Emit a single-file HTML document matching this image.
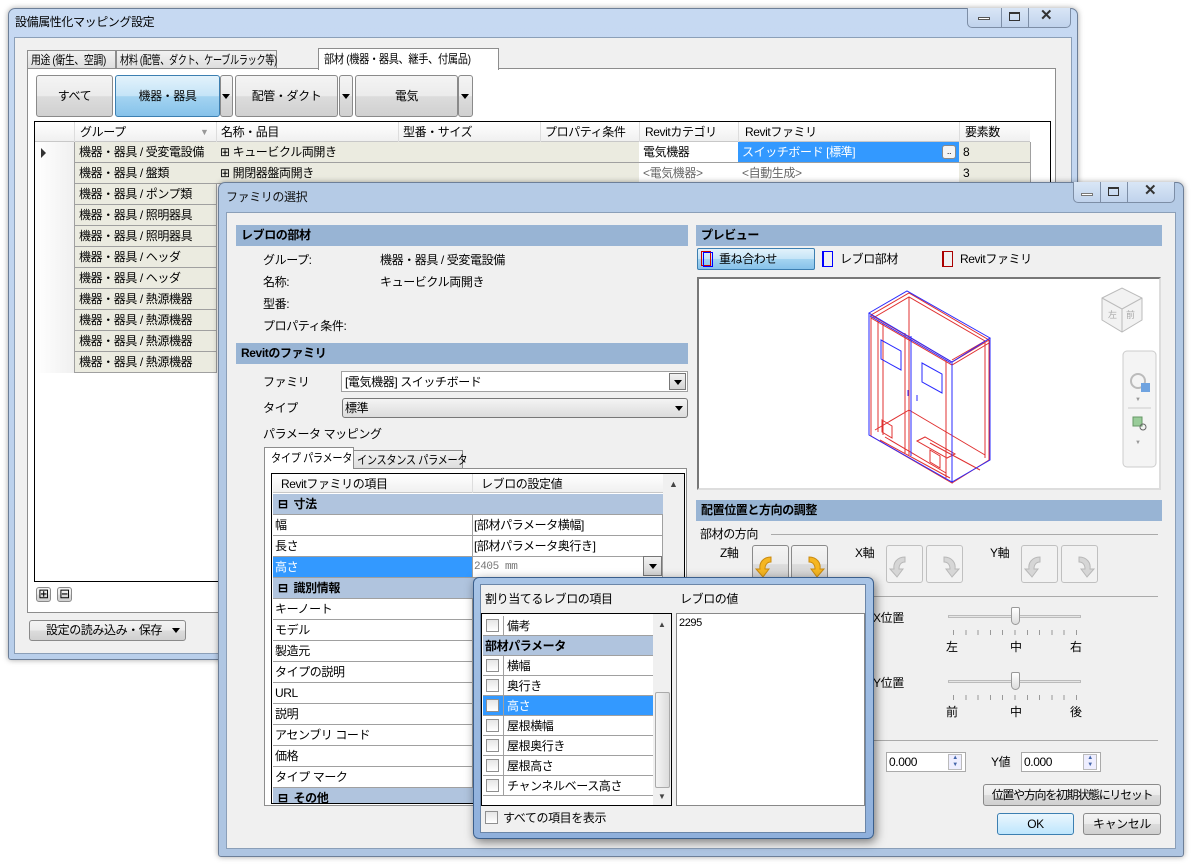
<!DOCTYPE html>
<html><head><meta charset="utf-8">
<style>
*{box-sizing:border-box;margin:0;padding:0}
body{width:1193px;height:864px;background:#fff;position:relative;overflow:hidden;font:12px "Liberation Sans","Noto Sans CJK JP",sans-serif;color:#000;letter-spacing:-0.4px}
.a{position:absolute}
.t{position:absolute;white-space:nowrap;line-height:14px}
.sx{transform-origin:0 50%}
.frame{position:absolute;background:linear-gradient(#c6d9f2,#b9cfeb);border:1px solid #6d7f98;border-radius:7px 7px 3px 3px;box-shadow:0 0 6px rgba(0,0,0,.35)}
.client{position:absolute;background:#f0f0f0;border:1px solid #8b9fb8}
.btn{position:absolute;border:1px solid #8a8a8a;border-radius:3px;background:linear-gradient(#f4f4f4 0,#ebebeb 50%,#dcdcdc 51%,#d0d0d0 100%);text-align:center}
.blue{background:linear-gradient(#e3f2fb 0,#c4e4f7 50%,#a4d4f1 51%,#86c2ea 100%);border-color:#3c7fb1}
.hdr{position:absolute;background:#98b4d4;font-weight:bold;padding-left:5px;line-height:21px;height:21px}
.cell{position:absolute;border-right:1px solid #a0a0a0;border-bottom:1px solid #a0a0a0;line-height:20px;padding-left:4px;white-space:nowrap;overflow:hidden}
.row{position:absolute;border-bottom:1px solid #a0a0a0;line-height:20px;white-space:nowrap;overflow:hidden}
.cb{position:absolute;width:13px;height:13px;border:1px solid #8f8f8f;background:linear-gradient(#e6e6e6,#fff)}
.tri{position:absolute;width:0;height:0;border-left:4px solid transparent;border-right:4px solid transparent;border-top:5px solid #000}
.tight{letter-spacing:-1.3px}
</style></head><body>

<div class="frame" style="left:8px;top:8px;width:1070px;height:652px"></div>
<div class="t" style="left:15px;top:15px">設備属性化マッピング設定</div>
<div class="a" style="left:967px;top:8px;width:104px;height:20px;border:1px solid #7d8ea6;border-top:none;border-radius:0 0 5px 5px;background:linear-gradient(#d9e6f6,#c0d3ec)"></div>
<div class="a" style="left:1001px;top:8px;width:1px;height:19px;background:#7d8ea6"></div>
<div class="a" style="left:1028px;top:8px;width:1px;height:19px;background:#7d8ea6"></div>
<div class="a" style="left:978px;top:17px;width:12px;height:3px;border:1px solid #555;background:#fff"></div>
<div class="a" style="left:1009px;top:12px;width:11px;height:9px;border:1px solid #333;border-top-width:2px"></div>
<div class="t" style="left:1040px;top:9px;font-size:15px;font-weight:bold;color:#333">✕</div>
<div class="client" style="left:14px;top:37px;width:1058px;height:617px"></div>

<div class="a" style="left:27px;top:50px;width:89px;height:19px;border:1px solid #8d8d8d;background:linear-gradient(#f2f2f2,#dedede)"></div>
<div class="t sx" style="left:31px;top:53px;transform:scaleX(.82)">用途 (衛生、空調)</div>
<div class="a" style="left:116px;top:50px;width:161px;height:19px;border:1px solid #8d8d8d;background:linear-gradient(#f2f2f2,#dedede)"></div>
<div class="t sx" style="left:120px;top:53px;transform:scaleX(.76)">材料 (配管、ダクト、ケーブルラック等)</div>
<div class="a" style="left:27px;top:68px;width:1029px;height:545px;border:1px solid #8d8d8d;background:#fff"></div>
<div class="a" style="left:318px;top:48px;width:181px;height:22px;border:1px solid #8d8d8d;border-bottom:none;background:#fff"></div>
<div class="t sx" style="left:324px;top:52px;transform:scaleX(.85)">部材 (機器・器具、継手、付属品)</div>

<div class="btn" style="left:36px;top:75px;width:77px;height:42px;line-height:40px">すべて</div>
<div class="btn blue" style="left:115px;top:75px;width:105px;height:42px;line-height:40px">機器・器具</div>
<div class="btn" style="left:220px;top:75px;width:13px;height:42px"></div><div class="tri" style="left:222px;top:94px"></div>
<div class="btn" style="left:235px;top:75px;width:103px;height:42px;line-height:40px">配管・ダクト</div>
<div class="btn" style="left:339px;top:75px;width:14px;height:42px"></div><div class="tri" style="left:342px;top:94px"></div>
<div class="btn" style="left:355px;top:75px;width:103px;height:42px;line-height:40px">電気</div>
<div class="btn" style="left:458px;top:75px;width:15px;height:42px"></div><div class="tri" style="left:461px;top:94px"></div>

<div class="a" style="left:34px;top:121px;width:1017px;height:461px;border:1px solid #000;background:#fff"></div>
<div class="a" style="left:35px;top:122px;width:995px;height:20px;background:linear-gradient(#fff,#f0f0f0);border-bottom:1px solid #c8c8c8"></div>
<div class="t" style="left:80px;top:125px">グループ</div><div class="t" style="left:200px;top:125px;color:#999;font-size:9px">▼</div>
<div class="t" style="left:221px;top:125px">名称・品目</div>
<div class="t" style="left:403px;top:125px">型番・サイズ</div>
<div class="t" style="left:545px;top:125px">プロパティ条件</div>
<div class="t" style="left:645px;top:125px">Revitカテゴリ</div>
<div class="t" style="left:745px;top:125px">Revitファミリ</div>
<div class="t" style="left:965px;top:125px">要素数</div>
<div class="a" style="left:74px;top:122px;width:1px;height:20px;background:#ddd"></div>
<div class="a" style="left:216px;top:122px;width:1px;height:20px;background:#ddd"></div>
<div class="a" style="left:398px;top:122px;width:1px;height:20px;background:#ddd"></div>
<div class="a" style="left:540px;top:122px;width:1px;height:20px;background:#ddd"></div>
<div class="a" style="left:639px;top:122px;width:1px;height:20px;background:#ddd"></div>
<div class="a" style="left:738px;top:122px;width:1px;height:20px;background:#ddd"></div>
<div class="a" style="left:959px;top:122px;width:1px;height:20px;background:#ddd"></div>

<div class="a" style="left:35px;top:142px;width:39px;height:231px;background:linear-gradient(90deg,#fff,#f0f0f0)"></div>
<div class="a" style="left:41px;top:148px;border-top:5px solid transparent;border-bottom:5px solid transparent;border-left:5px solid #333"></div>
<div id="rows"></div>
<script>
var g=["受変電設備","盤類","ポンプ類","照明器具","照明器具","ヘッダ","ヘッダ","熱源機器","熱源機器","熱源機器","熱源機器"];
var h="";
for(var i=0;i<11;i++){var y=142+i*21;
h+='<div class="cell" style="left:74px;top:'+y+'px;width:143px;height:21px;background:#ebebe0;border-left:1px solid #a0a0a0">機器・器具 / '+g[i]+'</div>';
if(i<2){
h+='<div class="cell" style="left:216px;top:'+y+'px;width:183px;height:21px;background:#ebebe0">⊞ '+(i==0?'キュービクル両開き':'開閉器盤両開き')+'</div>';
h+='<div class="cell" style="left:398px;top:'+y+'px;width:143px;height:21px;background:#ebebe0"></div>';
h+='<div class="cell" style="left:540px;top:'+y+'px;width:100px;height:21px;background:#ebebe0"></div>';
h+='<div class="cell" style="left:639px;top:'+y+'px;width:100px;height:21px;background:#fff;'+(i==1?'color:#666':'')+'">'+(i==0?'電気機器':'&lt;電気機器&gt;')+'</div>';
h+='<div class="cell" style="left:738px;top:'+y+'px;width:222px;height:21px;'+(i==0?'background:#3399ff;color:#fff':'background:#fff;color:#666')+'">'+(i==0?'スイッチボード [標準]':'&lt;自動生成&gt;')+'</div>';
h+='<div class="cell" style="left:959px;top:'+y+'px;width:72px;height:21px;background:#ebebe0">'+(i==0?'8':'3')+'</div>';
}}
document.getElementById('rows').outerHTML=h;
</script>
<div class="btn" style="left:942px;top:145px;width:14px;height:14px;font-size:9px;line-height:10px;background:#f4f4f4">..</div>
<div class="btn" style="left:36px;top:587px;width:15px;height:15px;line-height:12px;font-size:13px">⊞</div>
<div class="btn" style="left:57px;top:587px;width:15px;height:15px;line-height:12px;font-size:13px">⊟</div>
<div class="btn" style="left:29px;top:620px;width:157px;height:21px;line-height:19px;text-align:left;padding-left:16px">設定の読み込み・保存</div>
<div class="tri" style="left:172px;top:628px"></div>

<div class="frame" style="left:218px;top:182px;width:966px;height:675px;background:linear-gradient(#b5cbe6,#aec5e2)"></div>
<div class="t" style="left:226px;top:190px;color:#111">ファミリの選択</div>
<div class="a" style="left:1073px;top:182px;width:102px;height:21px;border:1px solid #7d8ea6;border-top:none;border-radius:0 0 5px 5px;background:linear-gradient(#d9e6f6,#c0d3ec)"></div>
<div class="a" style="left:1100px;top:182px;width:1px;height:20px;background:#7d8ea6"></div>
<div class="a" style="left:1127px;top:182px;width:1px;height:20px;background:#7d8ea6"></div>
<div class="a" style="left:1081px;top:193px;width:12px;height:3px;border:1px solid #777;background:#fff"></div>
<div class="a" style="left:1108px;top:187px;width:11px;height:9px;border:1px solid #333;border-top-width:2px"></div>
<div class="t" style="left:1144px;top:184px;font-size:15px;font-weight:bold;color:#333">✕</div>
<div class="client" style="left:226px;top:212px;width:950px;height:637px"></div>

<div class="hdr" style="left:236px;top:225px;width:452px">レブロの部材</div>
<div class="t" style="left:263px;top:253px">グループ:</div><div class="t" style="left:380px;top:253px">機器・器具 / 受変電設備</div>
<div class="t" style="left:263px;top:275px">名称:</div><div class="t" style="left:380px;top:275px">キュービクル両開き</div>
<div class="t" style="left:263px;top:297px">型番:</div>
<div class="t" style="left:263px;top:319px">プロパティ条件:</div>
<div class="hdr" style="left:236px;top:343px;width:452px">Revitのファミリ</div>
<div class="t" style="left:263px;top:375px">ファミリ</div>
<div class="a" style="left:341px;top:371px;width:347px;height:21px;border:1px solid #a0a0a0;background:#fff"></div>
<div class="t" style="left:345px;top:375px">[電気機器] スイッチボード</div>
<div class="a" style="left:669px;top:373px;width:17px;height:17px;border:1px solid #777;background:linear-gradient(#f2f2f2,#d4d4d4)"></div><div class="tri" style="left:674px;top:380px"></div>
<div class="t" style="left:263px;top:401px">タイプ</div>
<div class="a" style="left:342px;top:398px;width:346px;height:20px;border:1px solid #777;border-radius:3px;background:linear-gradient(#f4f4f4,#dcdcdc)"></div>
<div class="t" style="left:345px;top:401px">標準</div><div class="tri" style="left:675px;top:406px"></div>
<div class="t" style="left:263px;top:427px">パラメータ マッピング</div>

<div class="a" style="left:264px;top:468px;width:423px;height:338px;border:1px solid #8d8d8d;background:#fff"></div>
<div class="a" style="left:353px;top:450px;width:110px;height:19px;border:1px solid #8d8d8d;background:linear-gradient(#f2f2f2,#dedede)"></div>
<div class="t sx" style="left:357px;top:453px;transform:scaleX(.85)">インスタンス パラメータ</div>
<div class="a" style="left:264px;top:447px;width:90px;height:22px;border:1px solid #8d8d8d;border-bottom:none;background:#fff"></div>
<div class="t sx" style="left:271px;top:451px;transform:scaleX(.85)">タイプ パラメータ</div>

<div class="a" style="left:271px;top:473px;width:414px;height:331px;border:1px solid #000;background:#fff;overflow:hidden">
 <div class="a" style="left:1px;top:0;width:390px;height:19px;background:linear-gradient(#fff,#f0f0f0);border-bottom:1px solid #c8c8c8"></div>
 <div class="a" style="left:200px;top:0;width:1px;height:19px;background:#ddd"></div>
 <div class="t" style="left:9px;top:3px">Revitファミリの項目</div>
 <div class="t" style="left:209px;top:3px">レブロの設定値</div>
 <div class="a" style="left:391px;top:0;width:22px;height:330px;background:#f0f0f0"></div>
 <div class="t" style="left:397px;top:3px;font-size:9px;color:#444">▲</div>
 <div id="pg"></div>
</div>
<script>
var r=[["g","寸法"],["r","幅","[部材パラメータ横幅]"],["r","長さ","[部材パラメータ奥行き]"],["s","高さ","2405 mm"],["g","識別情報"],["r","キーノート"],["r","モデル"],["r","製造元"],["r","タイプの説明"],["r","URL"],["r","説明"],["r","アセンブリ コード"],["r","価格"],["r","タイプ マーク"],["g","その他"]];
var h="";
for(var i=0;i<r.length;i++){var y=20+i*21;var e=r[i];
if(e[0]=="g"){h+='<div class="row" style="left:1px;top:'+y+'px;width:390px;height:21px;background:#b0c4de;font-weight:bold;padding-left:5px">⊟&nbsp;&nbsp;'+e[1]+'</div>';}
else{h+='<div class="cell" style="left:1px;top:'+y+'px;width:200px;height:21px;padding-left:2px;'+(e[0]=="s"?'background:#3399ff;color:#fff':'')+'">'+e[1]+'</div>';
h+='<div class="cell" style="left:200px;top:'+y+'px;width:191px;height:21px;padding-left:2px;'+(e[0]=="s"?'color:#777;font-family:\'Liberation Mono\',monospace;font-size:11px':'')+'">'+(e[2]||'')+'</div>';}}
document.getElementById('pg').outerHTML=h;
</script>
<div class="a" style="left:643px;top:556px;width:19px;height:20px;border:1px solid #777;background:linear-gradient(#f2f2f2,#d4d4d4)"></div><div class="tri" style="left:649px;top:564px"></div>

<div class="hdr" style="left:696px;top:225px;width:466px">プレビュー</div>
<div class="btn blue" style="left:697px;top:248px;width:118px;height:22px;border-radius:2px"></div>
<div class="a" style="left:701px;top:251px;width:10px;height:15px;border:1px solid #c00"></div>
<div class="a" style="left:703px;top:252px;width:10px;height:15px;border:1px solid #00f"></div>
<div class="t" style="left:719px;top:252px">重ね合わせ</div>
<div class="a" style="left:822px;top:251px;width:11px;height:16px;border:1px solid #00f;border-left-width:2px"></div>
<div class="t" style="left:840px;top:252px">レブロ部材</div>
<div class="a" style="left:942px;top:251px;width:11px;height:16px;border:1px solid #a00;border-left-width:2px"></div>
<div class="t" style="left:960px;top:252px">Revitファミリ</div>
<div class="a" style="left:697px;top:277px;width:464px;height:213px;border:2px solid #777;border-right-color:#ddd;border-bottom-color:#ddd;background:#fff"></div>
<svg class="a" style="left:697px;top:277px" width="464" height="213" viewBox="697 277 464 213">
 <g fill="none" stroke="#e03030" stroke-width="1">
  <path d="M871 315 L909 293 L989 340 L952 362 Z"/>
  <path d="M873 318 L909 297 L985 341 L952 360"/>
  <path d="M871 318 L952 365 L989 343"/>
  <path d="M871 315 V436 L952 483 V362"/><path d="M989 340 V460 L952 483"/>
  <path d="M878 320 V432 M883 323 V435 M905 333 V453 M909 336 V455 M946 360 V478 M985 343 V458"/>
  <path d="M909 297 V410 L875 430 M909 410 L985 455"/>
  <path d="M882 420 L892 426 V438 L882 432 Z M930 450 L940 456 V468 L930 462 Z"/>
  <path d="M880 440 L950 478 M930 443 L980 470 M885 437 L946 473"/>
  <path d="M917 441 L925 437 L955 454 L947 458 Z"/>
 </g>
 <g fill="none" stroke="#2a2aff" stroke-width="1">
  <path d="M869 313 L907 291 L990 338 L952 362 Z"/>
  <path d="M869 313 V435 L952 482 V362 M990 338 V460 L952 482"/>
  <path d="M911 336 V456 M870 316 L951 363"/>
  <path d="M881 340 L901 351 V370 L881 359 Z M922 363 L942 374 V393 L922 382 Z"/>
  <path d="M908 390 V396 M917 395 V401"/>
 </g>
 <g fill="#f2f2f2" stroke="#bbb"><path d="M1102 298 L1122 288 L1142 298 L1142 320 L1122 332 L1102 320 Z"/><path d="M1102 298 L1122 309 L1142 298 M1122 309 V332" fill="none"/></g>
 <text x="1108" y="318" font-size="9" fill="#aaa">左</text><text x="1126" y="318" font-size="9" fill="#aaa">前</text>
 <rect x="1123" y="351" width="33" height="116" rx="4" fill="#f4f4f4" stroke="#ccc"/>
 <circle cx="1138" cy="381" r="7" fill="none" stroke="#bbb" stroke-width="2"/><rect x="1141" y="383" width="9" height="9" fill="#6fa3e0"/>
 <rect x="1133" y="417" width="9" height="9" fill="#9c9" stroke="#696"/><circle cx="1143" cy="427" r="3" fill="none" stroke="#666"/>
 <line x1="1128" y1="408" x2="1151" y2="408" stroke="#ccc"/>
 <text x="1135" y="401" font-size="6" fill="#999">▼</text><text x="1135" y="444" font-size="6" fill="#999">▼</text>
</svg>

<div class="hdr" style="left:696px;top:500px;width:466px">配置位置と方向の調整</div>
<div class="t" style="left:700px;top:527px">部材の方向</div>
<div class="a" style="left:771px;top:534px;width:387px;height:1px;background:#aaa"></div>
<div class="t" style="left:720px;top:546px">Z軸</div>
<div class="t" style="left:855px;top:546px">X軸</div>
<div class="t" style="left:990px;top:546px">Y軸</div>
<div class="btn" style="left:752px;top:545px;width:37px;height:38px"></div>
<div class="btn" style="left:791px;top:545px;width:37px;height:38px"></div>
<div class="btn" style="left:886px;top:545px;width:37px;height:38px;background:#f2f2f2;border-color:#c0c0c0"></div>
<div class="btn" style="left:926px;top:545px;width:37px;height:38px;background:#f2f2f2;border-color:#c0c0c0"></div>
<div class="btn" style="left:1021px;top:545px;width:37px;height:38px;background:#f2f2f2;border-color:#c0c0c0"></div>
<div class="btn" style="left:1061px;top:545px;width:37px;height:38px;background:#f2f2f2;border-color:#c0c0c0"></div>
<svg class="a" style="left:0;top:0" width="1193" height="864" pointer-events="none">
 <defs>
  <path id="ccw" d="M14 6 C6 6 2 12 3 18 L-1 18 L6 26 L12 18 L8 18 C8 14 10 11 14 11 Z"/>
 </defs>
 <g fill="#f5b622" stroke="#c98a10">
  <use href="#ccw" x="757" y="551"/>
  <use href="#ccw" transform="translate(823 551) scale(-1 1)"/>
 </g>
 <g fill="#d6d6d6" stroke="#b8b8b8">
  <use href="#ccw" x="891" y="551"/>
  <use href="#ccw" transform="translate(958 551) scale(-1 1)"/>
  <use href="#ccw" x="1026" y="551"/>
  <use href="#ccw" transform="translate(1093 551) scale(-1 1)"/>
 </g>
</svg>
<div class="a" style="left:870px;top:596px;width:288px;height:1px;background:#aaa"></div>
<div class="t" style="left:873px;top:611px">X位置</div>
<div class="a" style="left:948px;top:615px;width:133px;height:3px;border:1px solid #bbb;background:#e6e6e6"></div>
<div class="a" style="left:1011px;top:607px;width:9px;height:18px;border:1px solid #999;border-radius:2px 2px 5px 5px;background:linear-gradient(#fff,#ddd)"></div>
<div class="a" style="left:953px;top:630px;width:124px;height:5px;background:repeating-linear-gradient(90deg,#999 0 1px,transparent 1px 12.3px)"></div>
<div class="t" style="left:946px;top:640px">左</div><div class="t" style="left:1010px;top:640px">中</div><div class="t" style="left:1070px;top:640px">右</div>
<div class="t" style="left:873px;top:676px">Y位置</div>
<div class="a" style="left:948px;top:680px;width:133px;height:3px;border:1px solid #bbb;background:#e6e6e6"></div>
<div class="a" style="left:1011px;top:672px;width:9px;height:18px;border:1px solid #999;border-radius:2px 2px 5px 5px;background:linear-gradient(#fff,#ddd)"></div>
<div class="a" style="left:953px;top:695px;width:124px;height:5px;background:repeating-linear-gradient(90deg,#999 0 1px,transparent 1px 12.3px)"></div>
<div class="t" style="left:946px;top:705px">前</div><div class="t" style="left:1010px;top:705px">中</div><div class="t" style="left:1070px;top:705px">後</div>
<div class="a" style="left:870px;top:740px;width:288px;height:1px;background:#aaa"></div>
<div class="a" style="left:886px;top:752px;width:80px;height:20px;border:1px solid #aaa;background:#fff"></div>
<div class="t" style="left:889px;top:755px">0.000</div>
<div class="t" style="left:991px;top:755px">Y値</div>
<div class="a" style="left:1021px;top:752px;width:80px;height:20px;border:1px solid #aaa;background:#fff"></div>
<div class="t" style="left:1024px;top:755px">0.000</div>
<div class="a" style="left:948px;top:754px;width:14px;height:16px;border:1px solid #bbb;background:#eef;font-size:6px;color:#46a;text-align:center;line-height:7px">▲<br>▼</div>
<div class="a" style="left:1083px;top:754px;width:14px;height:16px;border:1px solid #bbb;background:#eef;font-size:6px;color:#46a;text-align:center;line-height:7px">▲<br>▼</div>
<div class="btn tight" style="left:983px;top:784px;width:178px;height:22px;line-height:20px">位置や方向を初期状態にリセット</div>
<div class="btn" style="left:997px;top:813px;width:77px;height:22px;line-height:20px;border-color:#3c7fb1;background:linear-gradient(#eaf6fd,#bee6fd)">OK</div>
<div class="btn" style="left:1083px;top:813px;width:78px;height:22px;line-height:20px">キャンセル</div>

<div class="a" style="left:473px;top:577px;width:401px;height:262px;border:1px solid #3b5f8c;border-radius:6px;background:linear-gradient(#a8c4e6,#8fb0dc);box-shadow:2px 3px 10px rgba(0,0,0,.5)"></div>
<div class="a" style="left:480px;top:584px;width:386px;height:249px;border:1px solid #6b86a8;background:#f0f0f0"></div>
<div class="t" style="left:485px;top:592px">割り当てるレブロの項目</div>
<div class="t" style="left:680px;top:592px">レブロの値</div>
<div class="a" style="left:481px;top:613px;width:191px;height:193px;border:1px solid #000;background:#fff;overflow:hidden">
 <div id="pl"></div>
 <div class="a" style="left:171px;top:0;width:19px;height:191px;background:#f0f0f0"></div>
 <div class="a" style="left:173px;top:78px;width:15px;height:96px;border:1px solid #aaa;border-radius:2px;background:linear-gradient(90deg,#f4f4f4,#dcdcdc)"></div>
 <div class="t" style="left:176px;top:4px;font-size:8px;color:#444">▲</div>
 <div class="t" style="left:176px;top:176px;font-size:8px;color:#444">▼</div>
</div>
<script>
var p=["備考","#部材パラメータ","横幅","奥行き","*高さ","屋根横幅","屋根奥行き","屋根高さ","チャンネルベース高さ"];var h="";
for(var i=0;i<p.length;i++){var y=2+i*20,s=p[i];
if(s[0]=="#"){h+='<div class="row" style="left:1px;top:'+y+'px;width:170px;height:20px;background:#b0c4de;font-weight:bold;padding-left:2px">'+s.slice(1)+'</div>';}
else{var sel=s[0]=="*";if(sel)s=s.slice(1);
h+='<div class="row" style="left:1px;top:'+y+'px;width:170px;height:20px;'+(sel?'background:#3399ff;color:#fff;':'')+'"><span style="position:absolute;left:20px;top:0;width:1px;height:20px;background:#a0a0a0"></span><span style="position:absolute;left:24px">'+s+'</span></div><div class="cb" style="left:4px;top:'+(y+3)+'px"></div>';}}
document.getElementById('pl').outerHTML=h;
</script>
<div class="a" style="left:676px;top:613px;width:189px;height:193px;border:1px solid #888;background:#fff"></div>
<div class="t" style="left:679px;top:616px;font-size:11px">2295</div>
<div class="cb" style="left:485px;top:811px"></div>
<div class="t" style="left:503px;top:811px">すべての項目を表示</div>
</body></html>
